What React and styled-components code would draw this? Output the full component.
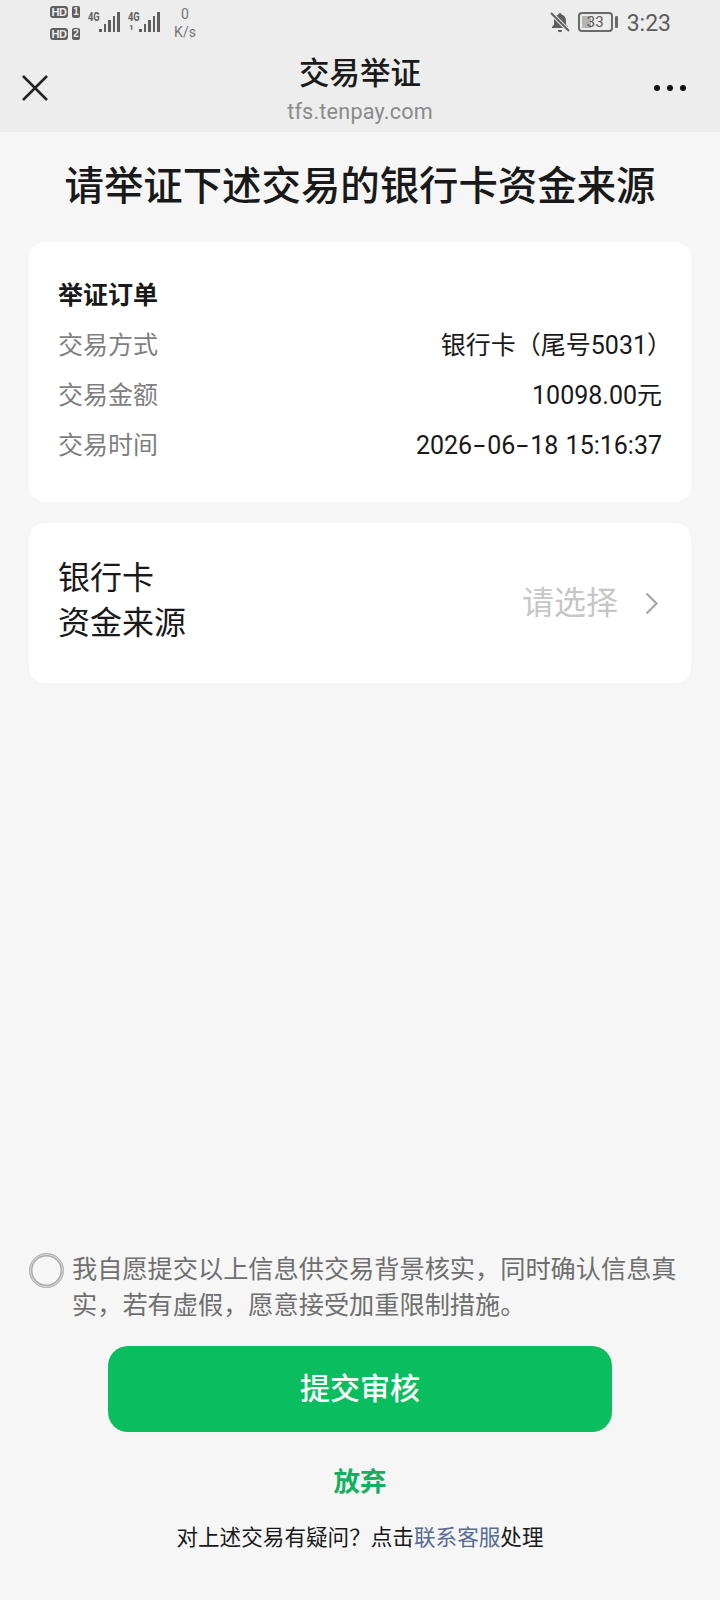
import React from 'react';
import styled, { createGlobalStyle } from 'styled-components';

const GlobalStyle = createGlobalStyle`
  html, body {
    margin: 0;
    padding: 0;
    background: #f6f6f6;
  }
  body {
    font-family: "Roboto", "Noto Sans CJK SC", sans-serif;
    color: #191919;
  }
`;

const Page = styled.div`
  width: 720px;
  height: 1600px;
  display: flex;
  flex-direction: column;
  overflow: hidden;
`;

const Top = styled.header`
  height: 132px;
  flex: none;
  background: #ededed;
  display: flex;
  flex-direction: column;
`;

const StatusBar = styled.div`
  height: 48px;
  padding: 1px 49px 0 50px;
  display: flex;
  justify-content: space-between;
  align-items: flex-start;
  box-sizing: border-box;
`;

const StatusLeft = styled.div`
  display: flex;
  align-items: flex-start;
  gap: 8px;
`;

const StatusRight = styled.div`
  display: flex;
  align-items: center;
  height: 42px;
`;

const Sims = styled.div`
  display: flex;
  flex-direction: column;
  gap: 10px;
  padding-top: 5px;
`;

const SimRow = styled.div`
  display: flex;
  align-items: center;
  gap: 4px;
`;

const HdBadge = styled.span`
  width: 18px;
  height: 12px;
  border-radius: 3px;
  background: #5f5f5f;
  color: #ededed;
  font: 700 11px/12px "Liberation Sans", sans-serif;
  letter-spacing: -0.5px;
  text-align: center;
`;

const SimBadge = styled.span`
  width: 8px;
  height: 12px;
  border-radius: 2px;
  background: #5f5f5f;
  color: #ededed;
  font: 700 10px/12px "Liberation Sans", sans-serif;
  text-align: center;
`;

const Signal = styled.div`
  position: relative;
  width: 32px;
  height: 31px;
  display: flex;
  align-items: flex-end;
  justify-content: flex-end;
  gap: 1.9px;
`;

const NetLabel = styled.span`
  position: absolute;
  left: 0;
  top: 10px;
  font: 700 13px/12px "Roboto", sans-serif;
  color: #5f5f5f;
  transform: scaleX(0.72);
  transform-origin: left center;
`;

const NetArrows = styled.span`
  position: absolute;
  left: 1px;
  bottom: 0;
  font: 700 8px/8px "Roboto", sans-serif;
  color: #5f5f5f;
`;

const Bar = styled.i`
  display: block;
  width: 2.7px;
  height: ${(p) => p.$h}px;
  background: #5f5f5f;
`;

const Speed = styled.div`
  width: 28px;
  margin-left: 3px;
  padding-top: 4px;
  text-align: center;
  font: 400 14px/18px "Roboto", sans-serif;
  color: #757575;
`;

const BatteryBody = styled.div`
  position: relative;
  box-sizing: border-box;
  width: 35px;
  height: 20px;
  margin-left: 8px;
  border: 2px solid #6a6a6a;
  border-radius: 4px;
  font: 400 15px/16px "Roboto", sans-serif;
  color: #5a5a5a;
  text-align: center;
  &::before {
    content: '';
    position: absolute;
    left: 2px;
    top: 2px;
    bottom: 2px;
    width: 9px;
    background: #b4b4b4;
  }
  span {
    position: relative;
  }
`;

const BatteryTip = styled.i`
  width: 3px;
  height: 12px;
  margin: 0 9px 0 2px;
  border-radius: 1px;
  background: #6a6a6a;
`;

const Clock = styled.span`
  margin-top: 3px;
  font-size: 23px;
  line-height: 28px;
  color: #5c5c5c;
`;

const NavBar = styled.div`
  flex: 1;
  display: flex;
  align-items: center;
  padding: 0 34px 0 22px;
`;

const NavTitle = styled.div`
  flex: 1;
  text-align: center;
  margin-top: 2px;
`;

const TitleText = styled.div`
  font-size: 30.5px;
  line-height: 36px;
  font-weight: 500;
  color: #1a1a1a;
`;

const Host = styled.div`
  margin-top: 6px;
  font-size: 21.6px;
  line-height: 28px;
  color: #8a8a8a;
  letter-spacing: 0.2px;
`;

const IconSlot = styled.div`
  width: ${(p) => p.$w}px;
  display: flex;
  margin-top: -4px;
`;

const Content = styled.main`
  flex: 1;
  display: flex;
  flex-direction: column;
  padding: 0 29px;
`;

const Heading = styled.h1`
  margin: 31px -10px 31px;
  font-size: 39.4px;
  line-height: 48px;
  font-weight: 500;
  text-align: center;
  color: #191919;
`;

const Card = styled.section`
  background: #fff;
  border-radius: 16px;
  padding: ${(p) => p.$pad || '0'};
  margin-bottom: 21px;
`;

const CardTitle = styled.div`
  font-size: 25px;
  line-height: 50px;
  font-weight: 700;
`;

const Row = styled.div`
  display: flex;
  justify-content: space-between;
  font-size: 25px;
  line-height: 50px;
`;

const RowLabel = styled.span`
  color: #7f7f7f;
`;

// closing bracket hangs into the card padding
const CardNumber = styled.span`
  margin-right: -10px;
`;

const DateText = styled.span`
  word-spacing: 1px;
`;

const Dash = styled.span`
  display: inline-block;
  width: 15px;
  text-align: center;
  transform: scaleX(1.7);
`;

const SourceCard = styled(Card)`
  height: 160px;
  box-sizing: border-box;
  display: flex;
  align-items: center;
  justify-content: space-between;
  padding: 0 33px 0 29px;
`;

const SourceLabel = styled.div`
  margin-top: -4px;
  font-size: 32px;
  line-height: 45px;
`;

const Picker = styled.div`
  display: flex;
  align-items: center;
  gap: 27px;
  font-size: 32px;
  color: #c6c6c6;
`;

const PickerText = styled.span`
  margin-top: -6px;
`;

const Footer = styled.div`
  margin-top: auto;
  display: flex;
  flex-direction: column;
  align-items: center;
  padding-bottom: 47px;
`;

const Agreement = styled.div`
  align-self: stretch;
  display: flex;
  gap: 8px;
  margin-right: -10px;
`;

const Radio = styled.span`
  flex: none;
  box-sizing: border-box;
  width: 35px;
  height: 35px;
  margin-top: 1px;
  border-radius: 50%;
  border: 1.5px solid #aaa;
  box-shadow: inset 0 0 0 1px #ddd, inset 0 0 0 2.5px #aaa;
`;

const AgreementText = styled.div`
  font-size: 25.2px;
  line-height: 35.5px;
  color: #6f6f6f;
`;

const Submit = styled.button`
  width: 504px;
  height: 86px;
  margin-top: 23px;
  padding: 0 0 6px;
  border: 0;
  border-radius: 20px;
  background: #0abd5e;
  color: #fff;
  font-family: inherit;
  font-size: 30px;
  font-weight: 500;
`;

const Abandon = styled.button`
  margin-top: 30px;
  padding: 0;
  border: 0;
  background: none;
  color: #16ae60;
  font-family: inherit;
  font-size: 26.5px;
  line-height: 40px;
  font-weight: 700;
`;

const Help = styled.div`
  margin-top: 21px;
  font-size: 21.6px;
  line-height: 30px;
  color: #191919;
`;

const HelpLink = styled.span`
  color: #576b95;
`;

const bars = [3, 8, 12, 16, 20];

const SignalBars = ({ arrows }) => (
  <Signal>
    <NetLabel>4G</NetLabel>
    {arrows && <NetArrows>1</NetArrows>}
    {bars.map((h) => (
      <Bar key={h} $h={h} />
    ))}
  </Signal>
);

const App = () => (
  <Page>
    <GlobalStyle />
    <Top>
      <StatusBar>
        <StatusLeft>
          <Sims>
            <SimRow>
              <HdBadge>HD</HdBadge>
              <SimBadge>1</SimBadge>
            </SimRow>
            <SimRow>
              <HdBadge>HD</HdBadge>
              <SimBadge>2</SimBadge>
            </SimRow>
          </Sims>
          <SignalBars />
          <SignalBars arrows />
          <Speed>
            0
            <br />
            K/s
          </Speed>
        </StatusLeft>
        <StatusRight>
          <svg width="20" height="21" viewBox="0 0 20 21">
            <path
              d="M10 1a1.600 1.600 0 0 1 1.600 1.600c3 .8 4.400 3.300 4.400 6.200v3.600l2 2.600v1H2v-1l2-2.600V8.800c0-2.900 1.400-5.400 4.400-6.200A1.600 1.600 0 0 1 10 1z"
              fill="#5f5f5f"
            />
            <path d="M7.800 18h4.400a2.200 2.200 0 0 1-4.400 0z" fill="#5f5f5f" />
            <path d="M1 1l18 18" stroke="#ededed" strokeWidth="4" />
            <path d="M1 1l18 18" stroke="#5f5f5f" strokeWidth="2" />
          </svg>
          <BatteryBody>
            <span>33</span>
          </BatteryBody>
          <BatteryTip />
          <Clock>3:23</Clock>
        </StatusRight>
      </StatusBar>
      <NavBar>
        <IconSlot $w={44}>
          <svg width="26" height="26" viewBox="0 0 26 26">
            <path d="M1 1l24 24M25 1L1 25" stroke="#222" strokeWidth="2.500" fill="none" />
          </svg>
        </IconSlot>
        <NavTitle>
          <TitleText>交易举证</TitleText>
          <Host>tfs.tenpay.com</Host>
        </NavTitle>
        <IconSlot $w={32}>
          <svg width="32" height="6" viewBox="0 0 32 6">
            <circle cx="3" cy="3" r="3" fill="#111" />
            <circle cx="16" cy="3" r="3" fill="#111" />
            <circle cx="29" cy="3" r="3" fill="#111" />
          </svg>
        </IconSlot>
      </NavBar>
    </Top>
    <Content>
      <Heading>请举证下述交易的银行卡资金来源</Heading>
      <Card $pad="29px 29px 31px">
        <CardTitle>举证订单</CardTitle>
        <Row>
          <RowLabel>交易方式</RowLabel>
          <CardNumber>银行卡（尾号5031）</CardNumber>
        </Row>
        <Row>
          <RowLabel>交易金额</RowLabel>
          <span>10098.00元</span>
        </Row>
        <Row>
          <RowLabel>交易时间</RowLabel>
          <DateText>
            2026<Dash>-</Dash>06<Dash>-</Dash>18 15:16:37
          </DateText>
        </Row>
      </Card>
      <SourceCard>
        <SourceLabel>
          银行卡
          <br />
          资金来源
        </SourceLabel>
        <Picker>
          <PickerText>请选择</PickerText>
          <svg width="13" height="23" viewBox="0 0 13 23">
            <path d="M1.500 1.500l10 10-10 10" stroke="#aaa" strokeWidth="2.400" fill="none" />
          </svg>
        </Picker>
      </SourceCard>
      <Footer>
        <Agreement>
          <Radio />
          <AgreementText>
            我自愿提交以上信息供交易背景核实，同时确认信息真实，若有虚假，愿意接受加重限制措施。
          </AgreementText>
        </Agreement>
        <Submit>提交审核</Submit>
        <Abandon>放弃</Abandon>
        <Help>
          对上述交易有疑问？点击<HelpLink>联系客服</HelpLink>处理
        </Help>
      </Footer>
    </Content>
  </Page>
);

export default App;
